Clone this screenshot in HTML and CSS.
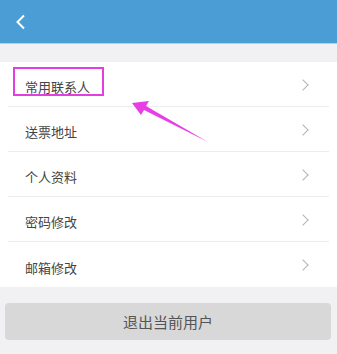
FILE: index.html
```html
<!DOCTYPE html>
<html lang="zh-CN">
<head>
    <title>账户设置</title>
    <meta charset="utf-8">
    <link rel="stylesheet" href="styles.css">
</head>
<body>
<div class="page">
    <div class="top-bar">
        <svg class="back" width="12" height="16" viewBox="0 0 12 16">
            <path d="M9 1.5 L2.5 8 L9 14.5" fill="none" stroke="#fff" stroke-width="2"/>
        </svg>
    </div>
    <div class="gap"></div>
    <ul class="menu">
        <li class="menu-item">常用联系人<span class="arrow"></span></li>
        <li class="menu-item">送票地址<span class="arrow"></span></li>
        <li class="menu-item">个人资料<span class="arrow"></span></li>
        <li class="menu-item">密码修改<span class="arrow"></span></li>
        <li class="menu-item">邮箱修改<span class="arrow"></span></li>
    </ul>
    <div class="bottom">
        <button class="logout" type="button">退出当前用户</button>
    </div>

    <!-- annotation -->
    <div class="mark"></div>
    <svg class="pointer" width="337" height="354" viewBox="0 0 337 354">
        <polygon points="132,103 149,101 146,106 208,142 144,110 141,115" fill="#e83ee6"/>
    </svg>
</div>
</body>
</html>
```

FILE: styles.css
```css
* {
    box-sizing: border-box;
}

body {
    margin: 0;
    font-family: "Noto Sans CJK SC", "Noto Sans", sans-serif;
    background: #f1f1f4;
}

.page {
    position: relative;
    width: 337px;
    height: 354px;
    overflow: hidden;
}

.top-bar {
    height: 44px;
    background: #4a9ed5;
    border-bottom: 1px solid #a9d2ee;
    display: flex;
    align-items: center;
    padding-left: 15px;
}

.back {
    display: block;
    margin-top: 0;
}

.gap {
    height: 18px;
}

.menu {
    list-style: none;
    margin: 0;
    padding: 0 8px;
    background: #fff;
}

.menu-item {
    height: 45px;
    display: flex;
    align-items: center;
    justify-content: space-between;
    padding: 5px 22px 0 17px;
    font-size: 13px;
    color: #444;
    border-bottom: 1px solid #ececec;
}

.menu-item:last-child {
    border-bottom: none;
}

.arrow {
    width: 8px;
    height: 8px;
    border-top: 1.3px solid #b3b3b3;
    border-right: 1.3px solid #b3b3b3;
    transform: rotate(45deg);
    margin-top: -4px;
}

.bottom {
    padding: 16px 6px 0 5px;
}

.logout {
    display: block;
    width: 100%;
    height: 37px;
    border: none;
    border-radius: 4px;
    background: #d8d8d9;
    color: #555;
    font-family: "Noto Sans CJK SC", sans-serif;
    font-size: 15px;
    padding: 0;
}

.mark {
    position: absolute;
    left: 13px;
    top: 67px;
    width: 91px;
    height: 29px;
    border: 2px solid #e23ee0;
}

.pointer {
    position: absolute;
    left: 0;
    top: 0;
}
```
